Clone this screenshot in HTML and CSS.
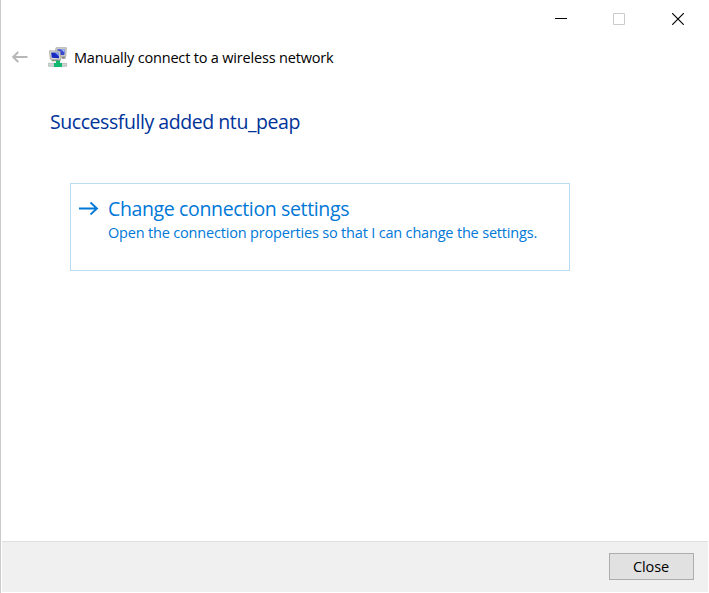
FILE: index.html
```html
<!DOCTYPE html>
<html lang="en">
<head>
<meta charset="utf-8">
<title>Manually connect to a wireless network</title>
<link rel="stylesheet" href="styles.css">
</head>
<body>
<div class="window">
  <div class="titlebar">
    <svg class="control" width="12" height="12" viewBox="0 0 12 12"><path d="M0 5.5H12" stroke="#000"/></svg>
    <svg class="control" width="12" height="12" viewBox="0 0 12 12"><path d="M.5.5h11v11H.5z" fill="none" stroke="#ccc"/></svg>
    <svg class="control" width="12" height="12" viewBox="0 0 12 12"><path d="M.2.2 11.8 11.8M11.8.2.2 11.8" stroke="#000" stroke-width="1.2"/></svg>
  </div>
  <header class="header">
    <svg class="back" width="16" height="12" viewBox="0 0 16 12"><path d="M1.200 6H15.500M6.200 1 1.200 6 6.200 11" fill="none" stroke="#b8b8b8" stroke-width="2"/></svg>
    <svg class="network" width="20" height="21" viewBox="0 0 20 21">
      <path d="M8 .7 18.300 .7 17.800 9.500 7 8.500z" fill="#d0d0cc" stroke="#a5a5a0" stroke-width=".8"/>
      <path d="M9.500 2.200H17L16.300 8H9z" fill="#3848d0"/>
      <path d="M12.500 2.200H17L16.500 5.500z" fill="#9cb8f4"/>
      <path d="M13 9.500h4l1 2-4 .5z" fill="#909088"/>
      <path d="M1.500 3.700 12 4.200 12.500 12.700 2.300 12.300z" fill="#d8d8d4" stroke="#a0a09a" stroke-width=".8"/>
      <path d="M3.200 5.400 10.700 5.800 11 11.200 3.700 10.800z" fill="#1828c0"/>
      <path d="M6.500 5.500 10.700 5.800 11 9.200z" fill="#7b9cf0"/>
      <path d="M3.500 13h8.500l1 1.300H3.500z" fill="#909088"/>
      <path d="M.3 16.300h18.400v3H.3z" fill="#cfd3d3" stroke="#a5aaaa" stroke-width=".6"/>
      <path d="M8 13.500h4V16h2v4H6v-4h2z" fill="#12b870"/>
    </svg>
    <span class="title">Manually connect to a wireless network</span>
  </header>
  <main class="content">
    <h1 class="heading">Successfully added ntu_peap</h1>
    <a class="command">
      <svg class="arrow" width="20" height="14" viewBox="0 0 20 14"><path d="M0 7.500H18M11.500 1.500 18 7.500 11.500 13.500" fill="none" stroke="#0078d7" stroke-width="1.800"/></svg>
      <span class="command-text">
        <span class="command-title">Change connection settings</span>
        <span class="command-note">Open the connection properties so that I can change the settings.</span>
      </span>
    </a>
  </main>
  <footer class="footer"><button class="close">Close</button></footer>
</div>
</body>
</html>
```
FILE: styles.css
```css
* { box-sizing: border-box; }
body { margin: 0; background: #fff; font-family: "Open Sans", "Noto Sans", sans-serif; }
svg { display: block; flex: none; }
.window {
  width: 709px;
  height: 593px;
  padding: 0 1px 1px;
  border-left: 1px solid #ccc;
  display: flex;
  flex-direction: column;
}
.titlebar { height: 38px; padding: 13px 24px 0 0; display: flex; justify-content: flex-end; gap: 47px; }
.control:first-child { margin-right: -1px; }
.header { height: 40px; padding-left: 10px; display: flex; align-items: center; }
.back { margin-top: -2px; }
.network { margin-left: 20px; margin-top: -1px; }
.title { margin-left: 6px; font-size: 14.5px; line-height: 20px; letter-spacing: -.18px; white-space: nowrap; }
.content { flex: 1; padding: 30px 0 0 48px; }
.heading { margin: 0; font-size: 19.5px; line-height: 28px; font-weight: 400; letter-spacing: -.44px; color: #039; white-space: nowrap; }
.command {
  width: 500px;
  height: 88px;
  margin: 47px 0 0 20px;
  padding: 11px 0 0 8px;
  border: 1px solid #bcdcf4;
  display: flex;
  color: #0078d7;
}
.arrow { margin-top: 6px; }
.command-text { margin-left: 9px; display: flex; flex-direction: column; white-space: nowrap; }
.command-title { font-size: 19.5px; line-height: 28px; letter-spacing: -.36px; }
.command-note { font-size: 14.5px; line-height: 20px; letter-spacing: -.18px; }
.footer {
  height: 51px;
  padding: 11px 14px 0 0;
  border-top: 1px solid #dfdfdf;
  background: #f0f0f0;
  display: flex;
  justify-content: flex-end;
  align-items: flex-start;
}
.close {
  width: 85px;
  height: 27px;
  padding: 0 1px 0 0;
  border: 1px solid #adadad;
  background: #e1e1e1;
  color: #000;
  font: 14.5px/25px "Open Sans", "Noto Sans", sans-serif;
  letter-spacing: -.1px;
}
```
